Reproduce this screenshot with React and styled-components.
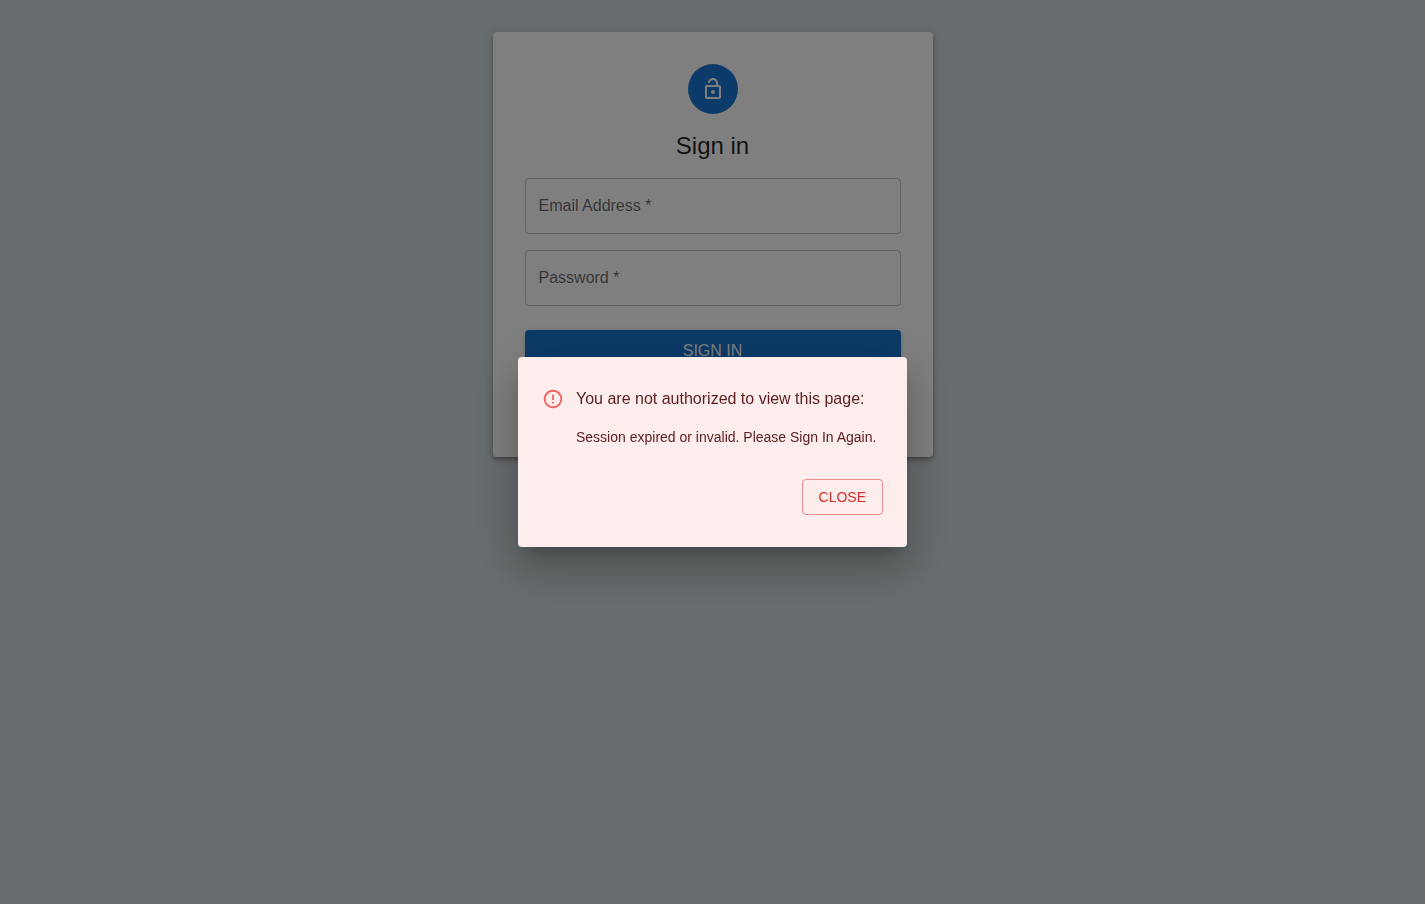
import React from "react";
import styled, { createGlobalStyle } from "styled-components";

const GlobalStyle = createGlobalStyle`
  *, *::before, *::after { box-sizing: border-box; }
  body {
    margin: 0;
    background: #cfd8dc;
    color: rgba(0, 0, 0, 0.87);
    font-family: "Liberation Sans", Arial, sans-serif;
    font-size: 16px;
    line-height: 24px;
  }
`;

const Page = styled.main`
  display: flex;
  justify-content: center;
  align-items: flex-start;
  min-height: 100vh;
  padding: 32px 16px;
`;

const Card = styled.section`
  display: flex;
  flex-direction: column;
  align-items: center;
  width: 100%;
  max-width: 440px;
  padding: 32px 32px 85px;
  border-radius: 4px;
  background: #fff;
  box-shadow:
    0 2px 4px -1px rgba(0, 0, 0, 0.2),
    0 4px 5px 0 rgba(0, 0, 0, 0.14),
    0 1px 10px 0 rgba(0, 0, 0, 0.12);
`;

const Avatar = styled.div`
  display: flex;
  align-items: center;
  justify-content: center;
  width: 50px;
  height: 50px;
  border-radius: 50%;
  background: #1976d2;
  color: #fff;
`;

const Icon = styled.svg`
  display: block;
  flex: none;
  width: ${({ $size }) => $size}px;
  height: ${({ $size }) => $size}px;
  fill: currentColor;
`;

const Title = styled.h1`
  margin: 16px 0;
  font-size: 24px;
  line-height: 32px;
  font-weight: 400;
`;

const Form = styled.form`
  display: flex;
  flex-direction: column;
  gap: 16px;
  width: 100%;
`;

const Field = styled.div`
  display: grid;
  height: 56px;
  border: 1px solid rgba(0, 0, 0, 0.23);
  border-radius: 4px;

  > * { grid-area: 1 / 1; }
  &:focus-within { border-color: #1976d2; }
`;

const FieldLabel = styled.label`
  align-self: center;
  padding: 0 13px;
  color: rgba(0, 0, 0, 0.6);
  pointer-events: none;
`;

const Input = styled.input`
  width: 100%;
  padding: 0 13px;
  border: 0;
  outline: 0;
  background: transparent;
  font: inherit;

  &:focus + ${FieldLabel}, &:valid + ${FieldLabel} { visibility: hidden; }
`;

const Button = styled.button`
  border-radius: 4px;
  font-family: inherit;
  font-weight: 400;
  text-transform: uppercase;
  cursor: pointer;
`;

const SubmitButton = styled(Button)`
  height: 42px;
  margin-top: 8px;
  border: 0;
  background: #1976d2;
  color: #fff;
  font-size: 16px;
  box-shadow:
    0 3px 1px -2px rgba(0, 0, 0, 0.2),
    0 2px 2px 0 rgba(0, 0, 0, 0.14),
    0 1px 5px 0 rgba(0, 0, 0, 0.12);
`;

const Backdrop = styled.div`
  position: fixed;
  inset: 0;
  display: flex;
  align-items: center;
  justify-content: center;
  padding: 32px;
  background: rgba(0, 0, 0, 0.5);
`;

const Dialog = styled.div`
  display: flex;
  flex-direction: column;
  gap: 32px;
  width: 100%;
  max-width: 389px;
  padding: 30px 24px 32px;
  border-radius: 4px;
  background: #fdeded;
  color: #5f2120;
  box-shadow:
    0 11px 15px -7px rgba(0, 0, 0, 0.2),
    0 24px 38px 3px rgba(0, 0, 0, 0.14),
    0 9px 46px 8px rgba(0, 0, 0, 0.12);
`;

const Alert = styled.div`
  display: flex;
  gap: 12px;
`;

const AlertIcon = styled.div`
  padding-top: 1px;
  color: #ef5350;
  opacity: 0.9;
`;

const AlertTitle = styled.h2`
  margin: 0 0 16px;
  font-size: 16px;
  line-height: 24px;
  font-weight: 400;
`;

const AlertText = styled.p`
  margin: 0;
  font-size: 14px;
  line-height: 20px;
`;

const CloseButton = styled(Button)`
  align-self: flex-end;
  height: 36px;
  padding: 0 16px;
  border: 1px solid rgba(211, 47, 47, 0.5);
  background: transparent;
  color: #d32f2f;
  font-size: 14px;
`;

function TextField({ id, label, type }) {
  return (
    <Field>
      <Input id={id} type={type} required />
      <FieldLabel htmlFor={id}>{label} *</FieldLabel>
    </Field>
  );
}

export default function App() {
  const [open, setOpen] = React.useState(true);

  return (
    <>
      <GlobalStyle />
      <Page>
        <Card>
          <Avatar>
            <Icon $size={24} viewBox="0 0 24 24" aria-hidden="true">
              <path d="M12 17c1.1 0 2-.9 2-2s-.9-2-2-2-2 .9-2 2 .9 2 2 2zm6-9h-1V6c0-2.76-2.24-5-5-5S7 3.24 7 6h1.9c0-1.71 1.39-3.1 3.1-3.1 1.71 0 3.1 1.39 3.1 3.1v2H6c-1.1 0-2 .9-2 2v10c0 1.1.9 2 2 2h12c1.1 0 2-.9 2-2V10c0-1.1-.9-2-2-2zm0 12H6V10h12v10z" />
            </Icon>
          </Avatar>
          <Title>Sign in</Title>
          <Form noValidate onSubmit={(event) => event.preventDefault()}>
            <TextField id="email" label="Email Address" type="text" />
            <TextField id="password" label="Password" type="password" />
            <SubmitButton type="submit">Sign In</SubmitButton>
          </Form>
        </Card>
      </Page>
      {open && (
        <Backdrop>
          <Dialog role="alertdialog" aria-modal="true" aria-labelledby="alert-title" aria-describedby="alert-text">
            <Alert>
              <AlertIcon>
                <Icon $size={22} viewBox="0 0 24 24" aria-hidden="true">
                  <path d="M11 15h2v2h-2zm0-8h2v6h-2zm.99-5C6.47 2 2 6.48 2 12s4.47 10 9.99 10C17.52 22 22 17.52 22 12S17.52 2 11.99 2zM12 20c-4.42 0-8-3.58-8-8s3.58-8 8-8 8 3.58 8 8-3.58 8-8 8z" />
                </Icon>
              </AlertIcon>
              <div>
                <AlertTitle id="alert-title">You are not authorized to view this page:</AlertTitle>
                <AlertText id="alert-text">Session expired or invalid. Please Sign In Again.</AlertText>
              </div>
            </Alert>
            <CloseButton type="button" onClick={() => setOpen(false)}>Close</CloseButton>
          </Dialog>
        </Backdrop>
      )}
    </>
  );
}
